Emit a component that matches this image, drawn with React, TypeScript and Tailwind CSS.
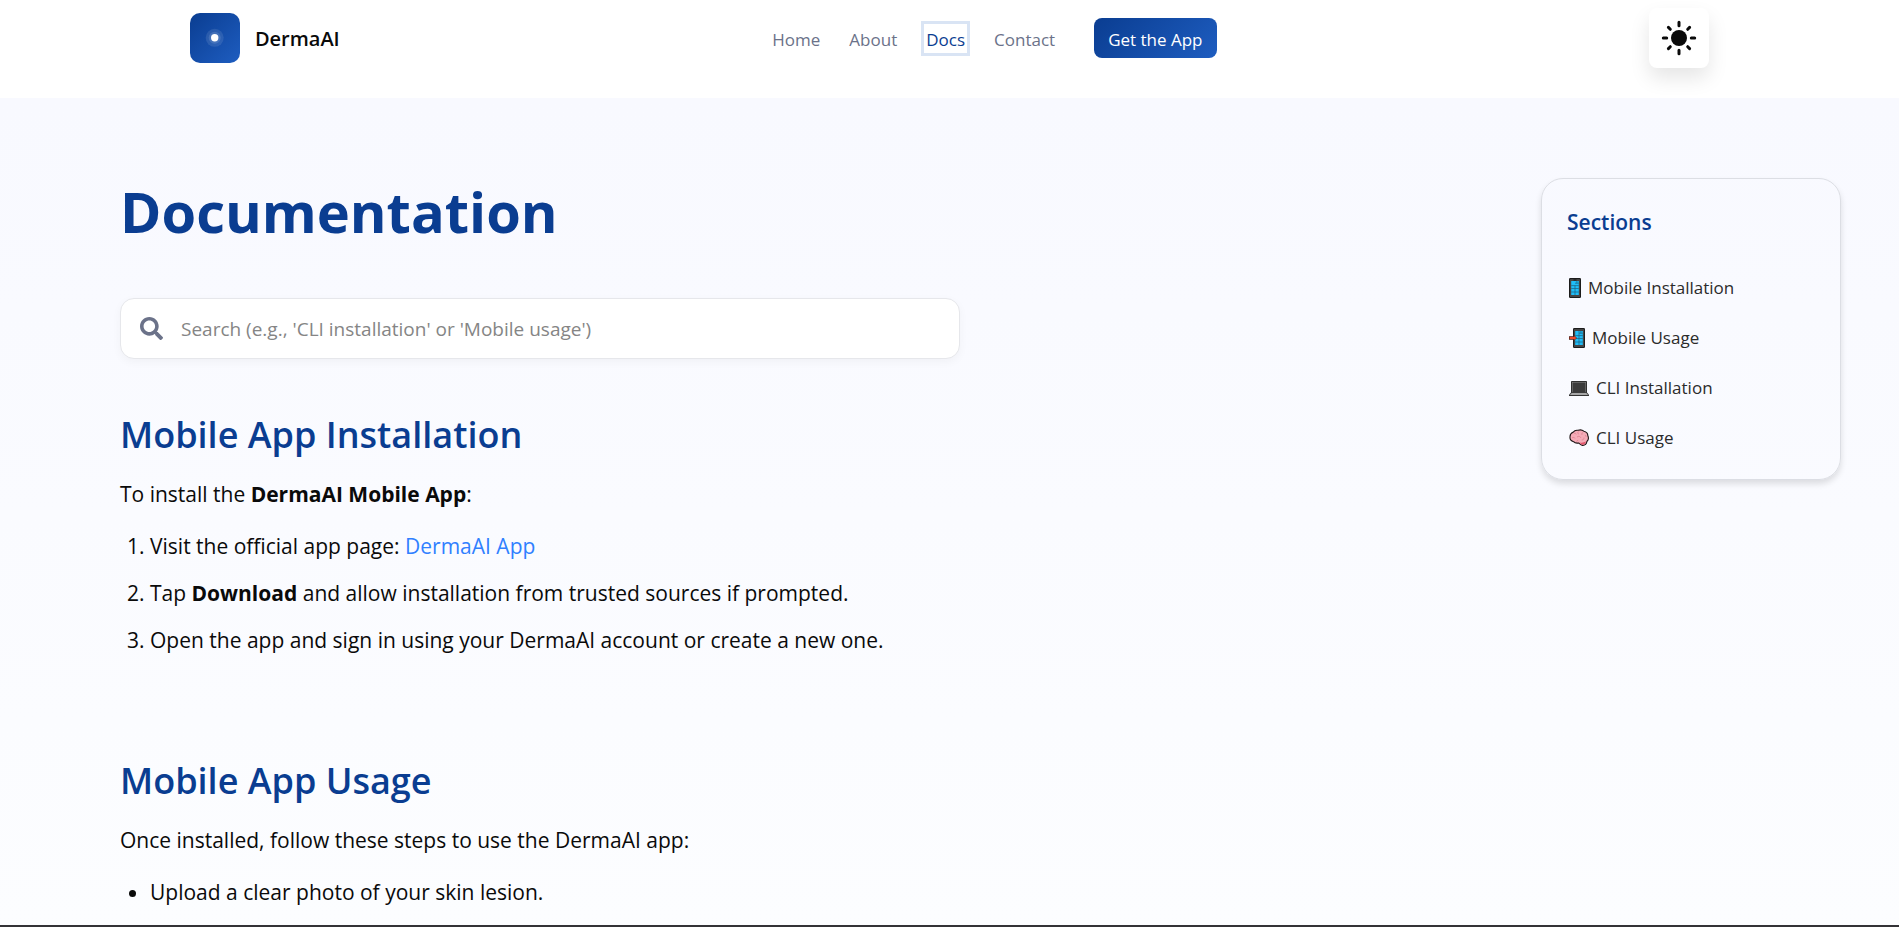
import type { ReactNode } from 'react';
import { FaSearch } from 'react-icons/fa';

const navLinks = ['Home', 'About'];

function LogoMark() {
  return (
    <svg viewBox="0 0 50 50" className="size-[50px]" aria-hidden="true">
      <defs>
        <linearGradient id="logo" x1="0" y1="0" x2="1" y2="1">
          <stop offset="0" stopColor="#0a3d91" />
          <stop offset="1" stopColor="#1e5dc0" />
        </linearGradient>
      </defs>
      <rect width="50" height="50" rx="10" fill="url(#logo)" />
      <circle cx="24.7" cy="24.8" r="9" fill="#fff" fillOpacity="0.1" />
      <circle cx="24.7" cy="24.8" r="6" fill="#fff" fillOpacity="0.12" />
      <circle cx="24.7" cy="24.8" r="3.7" fill="#fff" />
    </svg>
  );
}

function SunIcon() {
  return (
    <svg viewBox="0 0 36 36" className="size-9" aria-hidden="true">
      <circle cx="18" cy="18" r="8" fill="#0a0a0a" />
      <g stroke="#0a0a0a" strokeWidth="3" strokeLinecap="round">
        <path d="M18 2.300v3.400M18 30.300v3.400M2.300 18h3.400M30.300 18h3.400M7.400 7.400l1.900 1.900M26.700 26.700l1.900 1.900M28.600 7.400l-1.900 1.900M9.300 26.700l-1.900 1.900" />
      </g>
    </svg>
  );
}

function PhoneIcon() {
  return (
    <svg viewBox="0 0 12 20" className="h-5 w-3 shrink-0" aria-hidden="true">
      <rect width="12" height="20" rx="1.3" fill="#1c1c1c" />
      <rect x="1" y="1" width="10" height="18" rx="0.6" fill="#454545" />
      <rect x="2.200" y="3" width="7.600" height="14" fill="#1fbdf8" />
      <path d="M2.200 7.600h7.600M2.200 10.500h7.600M2.200 14h7.600M6 7.600v9.400M6 5.200h3.800M7.900 3v2.200" stroke="#1c5f80" strokeWidth=".7" />
      <path d="M4.500 2h3" stroke="#151515" />
    </svg>
  );
}

function PhoneArrowIcon() {
  return (
    <svg viewBox="0 0 16 20" className="h-5 w-4 shrink-0" aria-hidden="true">
      <rect x="4" width="12" height="20" rx="1.3" fill="#1c1c1c" />
      <rect x="5" y="1" width="10" height="18" rx="0.6" fill="#454545" />
      <rect x="6.200" y="3" width="7.600" height="14" fill="#1fbdf8" />
      <path d="M6.200 7.600h7.600M6.200 10.500h7.600M6.200 14h7.600M10 3v14M10 5.200h3.800M11.900 3v2.200" stroke="#1c5f80" strokeWidth=".7" />
      <path d="M0 8.200h4.200V6.800L8 10l-3.800 3.200v-1.400H0z" fill="#4a1f18" />
      <path d="M.7 9h4.200V7.900L7.500 10l-2.600 2.100V11H.7z" fill="#ee4a2b" />
    </svg>
  );
}

function LaptopIcon() {
  return (
    <svg viewBox="0 0 20 20" className="size-5 shrink-0" aria-hidden="true">
      <rect x="2" y="3" width="16" height="12.5" rx="1" fill="#1a1a1a" />
      <rect x="2.8" y="3.8" width="14.4" height="11" fill="#8b8b8b" />
      <rect x="3.500" y="4.500" width="13" height="10" fill="#3b3b3b" />
      <path d="M2.200 14.300h15.600l2.200 2.400v1.200H0v-1.200z" fill="#333" />
      <path d="M2.600 14.900h14.800l1.700 2.200H.9z" fill="#a6a6a6" />
    </svg>
  );
}

function BrainIcon() {
  return (
    <svg viewBox="0 0 20 20" className="size-5 shrink-0" aria-hidden="true">
      <path d="M1 9C.9 6.700 2.300 5 4 4.300 5.400 2.500 7.500 2 9 2.300c2.200-.8 4.600-.2 5.800.9 2.400.5 4 2.300 4 4.300 1 2.300.6 4.600-.9 6-.4 2.600-2.300 4-4.500 3.900-1.800-.2-2.600-1.100-3.600-2.400-2.100.4-4.100 0-5.200-1.300C2.400 13 .7 11.500 1 9z" fill="#f5abb7" stroke="#1d1415" strokeWidth="1.1" />
      <path d="M11 14.500c1.600.6 4 .2 6-.9-.5 2-1.700 3.300-3.600 3.200-1.200-.1-1.900-1-2.400-2.300z" fill="#e2566c" />
      <path d="M5 5.500c1-.4 2 .1 2.300 1M9.500 3.500c-1.200 1-.7 2.400.4 2.700M14 4.500c-1.500.5-1.500 2-.6 2.500M3 10c1-.9 2.500-.7 3 .4M8 9c1.500-1.200 3.500-.6 3.800.8M15 9.500c.2 1.500-.8 2.500-2.300 2.500M9.200 12.300c-.8 0-1.500.5-1.700 1.300M16 7c.8.3 1.200 1 1.100 1.900" fill="none" stroke="#d97b8b" strokeWidth=".7" />
    </svg>
  );
}

const sections: { label: string; href: string; icon: ReactNode }[] = [
  { label: 'Mobile Installation', href: '#mobile-installation', icon: <PhoneIcon /> },
  { label: 'Mobile Usage', href: '#mobile-usage', icon: <PhoneArrowIcon /> },
  { label: 'CLI Installation', href: '#cli-installation', icon: <LaptopIcon /> },
  { label: 'CLI Usage', href: '#cli-usage', icon: <BrainIcon /> },
];

function Header() {
  return (
    <header className="flex items-center justify-between bg-white px-[10%] pt-2 pb-[30px]">
      <a href="#home" className="flex items-center gap-[15px]">
        <LogoMark />
        <span className="pt-[2px] text-[20px] leading-7 font-semibold text-[#0a0a0a]">DermaAI</span>
      </a>
      <nav className="flex items-center gap-[29px] text-[17px] leading-[23px] text-[#6b7289]">
        {navLinks.map((label) => (
          <a key={label} href={`#${label.toLowerCase()}`} className="pt-[2px]">{label}</a>
        ))}
        <a href="#docs" aria-current="page" className="pt-[2px] text-[#0a3d91] outline-3 outline-offset-2 outline-[#d9e4f4]">Docs</a>
        <a href="#contact" className="pt-[2px]">Contact</a>
        <button type="button" className="ml-[10px] h-10 rounded-lg bg-linear-135 from-[#0a3d91] to-[#1e5dc0] px-[14px] pt-[2px] text-white">
          Get the App
        </button>
      </nav>
      <button type="button" aria-label="Toggle theme" className="flex size-[60px] items-center justify-center rounded-lg bg-white shadow-[0_10px_20px_rgba(0,0,0,0.1)]">
        <SunIcon />
      </button>
    </header>
  );
}

export default function App() {
  return (
    <div className="flex min-h-screen flex-col bg-white font-['Open_Sans','Noto_Sans',sans-serif] text-[#0a0a0a]">
      <Header />
      <div className="flex flex-1 items-start justify-between bg-linear-to-b from-[#f8f9ff] to-[#fcfdff] pt-20 pr-[58px] pl-[120px]">
        <main className="w-full max-w-[840px] text-[21px] leading-[35px]">
          <h1 className="mb-[54px] text-[56px] leading-[66px] font-bold text-[#0a3d91]">Documentation</h1>
          <label className="mb-[54px] flex h-[61px] items-center gap-[18px] rounded-[14px] border border-[#e6e7eb] bg-white px-[19px] shadow-[0_3px_10px_rgba(0,0,0,0.04)]">
            <FaSearch className="size-[23px] shrink-0 text-[#6b7289]" aria-hidden="true" />
            <input
              type="search"
              aria-label="Search documentation"
              placeholder="Search (e.g., 'CLI installation' or 'Mobile usage')"
              className="min-w-0 flex-1 bg-transparent pt-[2px] text-[19px] outline-none placeholder:text-[#858585]"
            />
          </label>

          <section id="mobile-installation" className="mb-[101px]">
            <h2 className="mb-5 text-[36px] leading-[44px] font-semibold text-[#0a3d91]">Mobile App Installation</h2>
            <p className="mb-[17px]">
              To install the <strong>DermaAI Mobile App</strong>:
            </p>
            <ol className="list-decimal space-y-3 pl-[30px]">
              <li>
                Visit the official app page: <a href="#app" className="text-[#3080ff]">DermaAI App</a>
              </li>
              <li>
                Tap <strong>Download</strong> and allow installation from trusted sources if prompted.
              </li>
              <li>Open the app and sign in using your DermaAI account or create a new one.</li>
            </ol>
          </section>

          <section id="mobile-usage">
            <h2 className="mb-5 text-[36px] leading-[44px] font-semibold text-[#0a3d91]">Mobile App Usage</h2>
            <p className="mb-[17px]">Once installed, follow these steps to use the DermaAI app:</p>
            <ul className="list-disc pl-[30px]">
              <li>Upload a clear photo of your skin lesion.</li>
            </ul>
          </section>
        </main>

        <aside className="w-[300px] shrink-0 rounded-[22px] border border-[#dcdee4] px-[25px] pt-6 pb-4 shadow-[0_4px_6px_rgba(0,0,0,0.12)]">
          <h3 className="mb-[22px] text-[21px] leading-[38px] font-semibold text-[#0a3d91]">Sections</h3>
          <ul className="text-[17px] text-[#2b2b2b]">
            {sections.map(({ label, href, icon }) => (
              <li key={label}>
                <a href={href} className="flex h-[50px] items-center gap-[7px] pl-[2px]">
                  {icon}
                  {label}
                </a>
              </li>
            ))}
          </ul>
        </aside>
      </div>
      <footer className="h-[2px] bg-[#333236]" />
    </div>
  );
}
